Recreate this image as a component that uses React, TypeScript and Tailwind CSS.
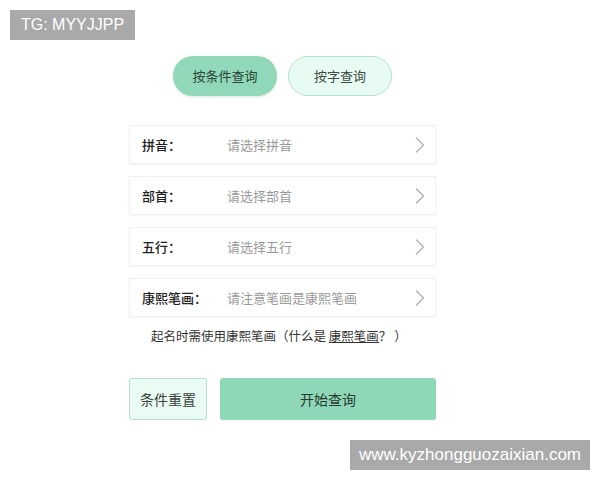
import { ChevronRight } from 'lucide-react';

const rows = [
  { label: '拼音：', hint: '请选择拼音' },
  { label: '部首：', hint: '请选择部首' },
  { label: '五行：', hint: '请选择五行' },
  { label: '康熙笔画：', hint: '请注意笔画是康熙笔画' },
];

export default function App() {
  return (
    <div
      className="relative w-[600px] h-[480px] bg-white overflow-hidden"
      style={{ fontFamily: '"Noto Sans CJK SC", "Noto Sans", sans-serif' }}
    >
      <div className="absolute left-[10px] top-[10px] w-[125px] h-[30px] bg-[#a9a9a9] text-white text-[16px] flex items-center justify-center" style={{ fontFamily: '"Liberation Sans", sans-serif' }}>
        TG: MYYJJPP
      </div>

      <div className="ml-[129px] w-[307px] pt-[56px] flex flex-col">
        <div className="flex justify-center gap-[11px]">
          <button className="w-[104px] h-[40px] rounded-full bg-[#90d8b8] text-[#2b4538] text-[13px] shadow-[0_1px_3px_rgba(0,0,0,0.12)]">
            按条件查询
          </button>
          <button className="w-[104px] h-[40px] rounded-full bg-[#e8fbf3] border border-[#b3e0cc] text-[#3c4a44] text-[13px]">
            按字查询
          </button>
        </div>

        <div className="mt-[29px] flex flex-col gap-[12px]">
          {rows.map((r) => (
            <div
              key={r.label}
              className="h-[39px] flex items-center pl-[12px] pr-[1px] bg-white border border-[#f0f0f0] shadow-[0_1px_2px_rgba(0,0,0,0.04)]"
            >
              <span className="w-[85px] text-[13px] text-[#222] font-medium">{r.label}</span>
              <span className="flex-1 text-[13px] text-[#9a9a9a]">{r.hint}</span>
              <ChevronRight className="w-[28px] h-[28px] text-[#b0b0b0]" strokeWidth={1.1} />
            </div>
          ))}
        </div>

        <p className="mt-[10px] h-[18px] leading-[18px] pl-[22px] text-[12.5px] text-[#333]">
          起名时需使用康熙笔画（什么是 <span className="underline">康熙笔画</span>？ ）
        </p>

        <div className="mt-[33px] flex gap-[13px]">
          <button className="w-[78px] h-[42px] rounded-[3px] bg-[#e9fbf3] border border-[#b6dfcd] text-[#3a4540] text-[14px]">
            条件重置
          </button>
          <button className="flex-1 h-[42px] rounded-[3px] bg-[#8fd8b7] text-[#253a30] text-[14px]">
            开始查询
          </button>
        </div>
      </div>

      <div className="absolute left-[350px] top-[440px] w-[240px] h-[30px] bg-[#a9a9a9] text-white text-[17px] flex items-center justify-center" style={{ fontFamily: '"Liberation Sans", sans-serif' }}>
        www.kyzhongguozaixian.com
      </div>
    </div>
  );
}
